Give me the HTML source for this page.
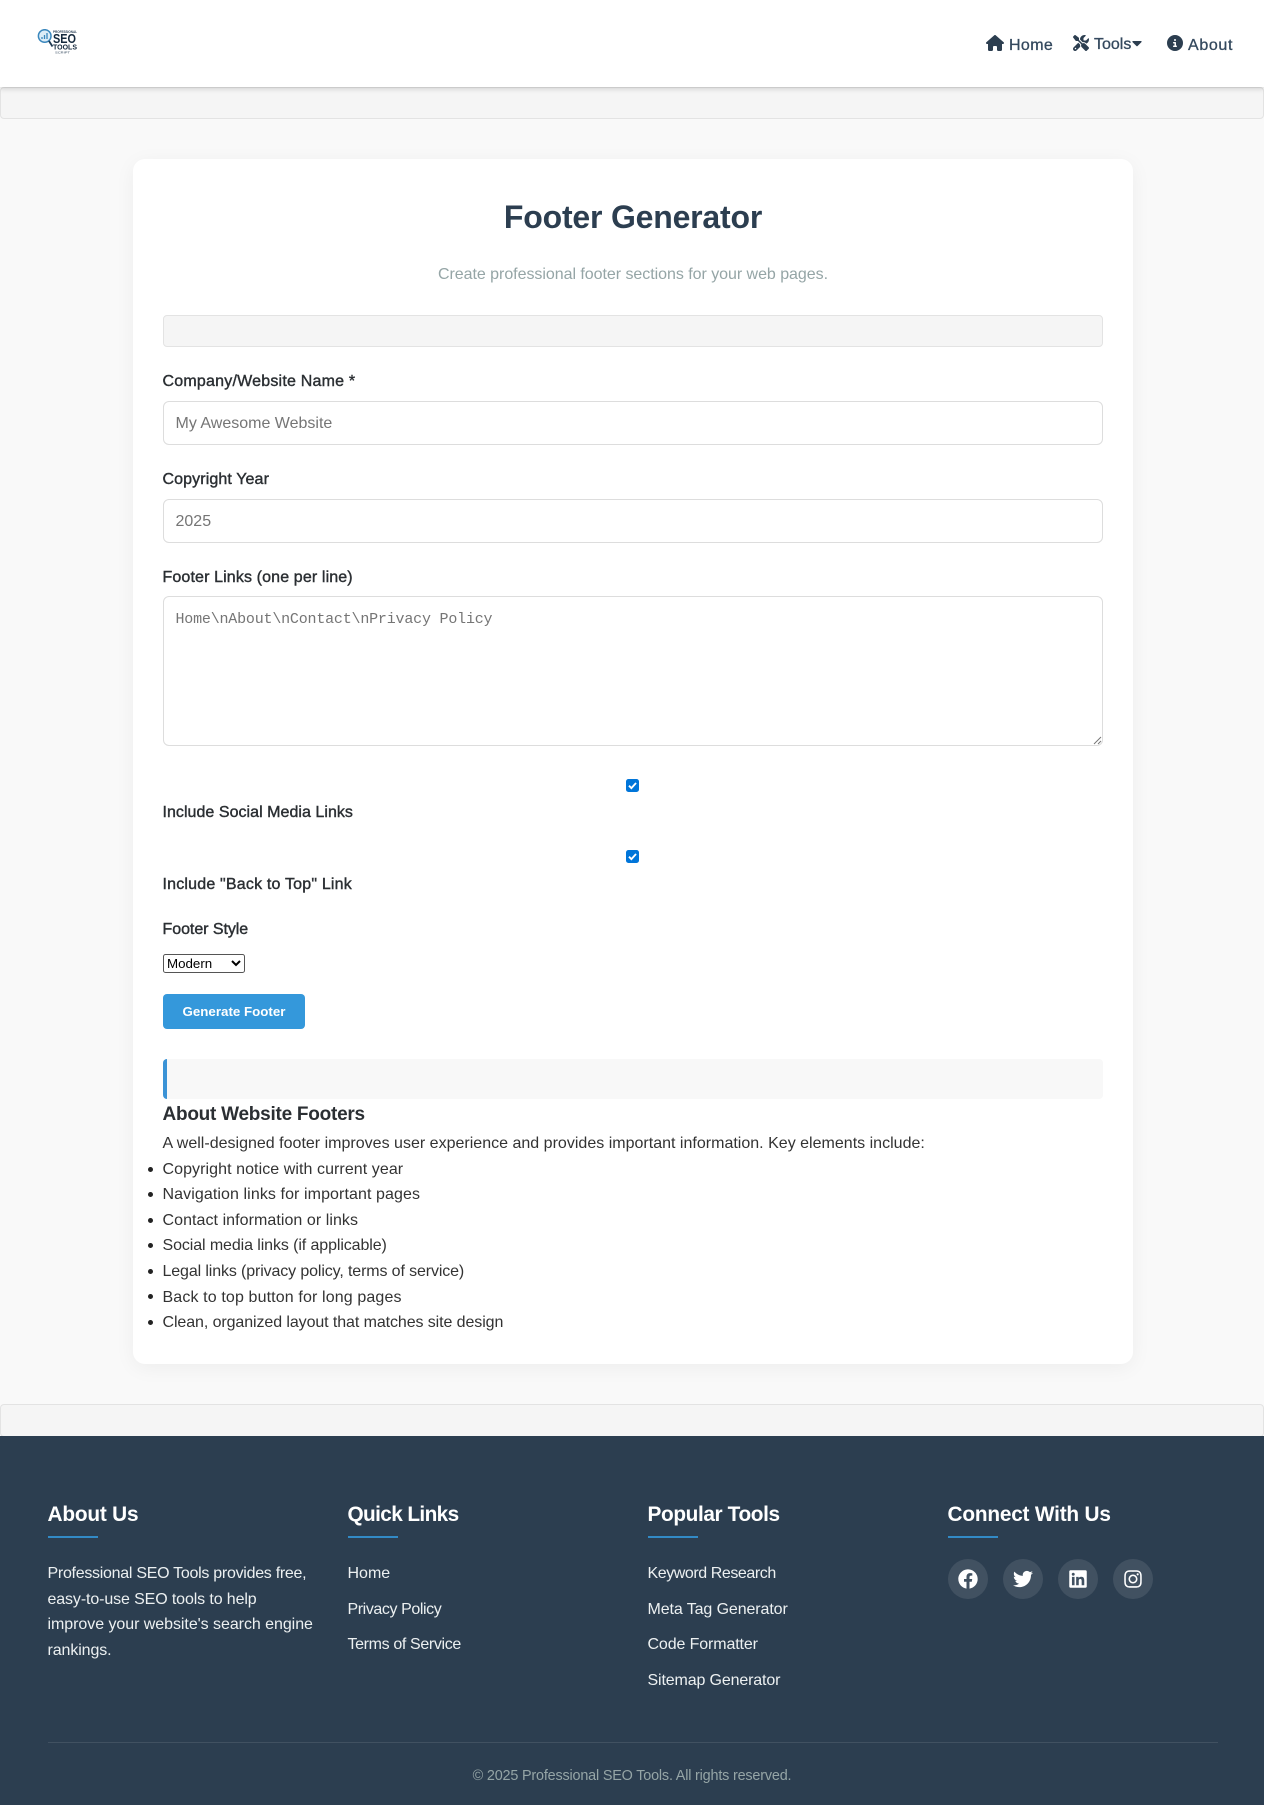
<!DOCTYPE html>
<html lang="en">
<head>
<meta charset="utf-8">
<title>Footer Generator</title>
<style>
*{box-sizing:border-box}
html,body{margin:0;padding:0}
body{position:relative;width:1264px;height:1805px;overflow:hidden;background:#f9f9f9;font-family:"Liberation Sans",Arial,sans-serif;color:#333}
.t{position:absolute;white-space:nowrap;line-height:20px;font-size:16px}
.lb{color:#2b2f33;-webkit-text-stroke:.4px #2b2f33}
.nv{color:#34495e;-webkit-text-stroke:.3px #34495e}
.bar{position:absolute;background:#f5f5f5;border:1px solid #e3e3e3;border-radius:4px}
.in{position:absolute;left:163px;width:940px;background:#fff;border:1px solid #ddd;border-radius:6px}
.ph{color:#757575}
.li{color:#333}
.dot{position:absolute;left:148px;width:5px;height:5px;border-radius:50%;background:#222}
.fh{position:absolute;white-space:nowrap;font-size:20.8px;line-height:24px;font-weight:700;color:#fff}
.ul{position:absolute;width:50px;height:2px;background:#3498db;opacity:.85}
.ft{position:absolute;white-space:nowrap;font-size:16px;line-height:20px;color:#ecf0f1}
.soc{position:absolute;top:1559px;width:40px;height:40px;border-radius:50%;background:rgba(255,255,255,.1)}
.soc svg{position:absolute;fill:#fff}
svg{display:block}
.cb{position:absolute;left:626px;width:13px;height:13px;background:#0075d9;border-radius:2.5px}
</style>
</head>
<body>
<!-- header -->
<div style="position:absolute;left:0;top:0;width:1264px;height:87px;background:#fff;box-shadow:0 2px 5px rgba(0,0,0,.15);z-index:2">
  <svg style="position:absolute;left:37px;top:29px;filter:blur(.3px)" width="42" height="26" viewBox="0 0 42 26">
    <circle cx="7.700" cy="7" r="6.300" fill="#dcecf7" stroke="#3a87bd" stroke-width="1.500"/>
    <path d="M5 10V8M7.500 10V6M10 10V4" stroke="#3a87bd" stroke-width="1.300"/>
    <path d="M12 12l3.500 5.500" stroke="#1f3a52" stroke-width="1.800"/>
    <text x="16" y="4" font-family="Liberation Sans" font-size="3.200" font-weight="700" fill="#34495e" textLength="24" lengthAdjust="spacingAndGlyphs">PROFESSIONAL</text>
    <text x="16" y="14" font-family="Liberation Sans" font-size="13" font-weight="700" fill="#14283c" textLength="23" lengthAdjust="spacingAndGlyphs">SEO</text>
    <text x="16" y="20.500" font-family="Liberation Sans" font-size="7.500" font-weight="700" fill="#14283c" textLength="24" lengthAdjust="spacingAndGlyphs">TOOLS</text>
    <text x="18" y="24.500" font-family="Liberation Sans" font-size="3" fill="#34495e" textLength="15" lengthAdjust="spacingAndGlyphs">SCRIPT</text>
  </svg>
  <svg style="position:absolute;left:986px;top:35px" width="18" height="16" viewBox="0 0 576 512" fill="#2c3e50"><path d="M575.8 255.5c0 18-15 32.100-32 32.100h-32l.7 160.200c0 2.700-.2 5.400-.5 8.100V472c0 22.100-17.900 40-40 40H456c-1.100 0-2.200 0-3.300-.1c-1.400 .1-2.800 .1-4.200 .1H416 392c-22.100 0-40-17.900-40-40V448 384c0-17.700-14.300-32-32-32H256c-17.700 0-32 14.300-32 32v64 24c0 22.100-17.900 40-40 40H160 128.100c-1.500 0-3-.1-4.500-.2c-1.200 .1-2.400 .2-3.600 .2H104c-22.100 0-40-17.900-40-40V360c0-.9 0-1.900 .1-2.800V287.600H32c-18 0-32-14-32-32.100c0-9 3-17 10-24L266.400 8c7-7 15-8 22-8s15 2 21 7L564.800 231.500c8 7 12 15 11 24z"/></svg>
  <span class="t nv" style="left:1009px;top:36px;letter-spacing:.38px">Home</span>
  <svg style="position:absolute;left:1073px;top:35px" width="16" height="16" viewBox="0 0 512 512" fill="#2c3e50"><path d="M78.600 5C69.100-2.400 55.600-1.500 47 7L7 47c-8.500 8.500-9.400 22-2.100 31.600l80 104c4.500 5.900 11.600 9.400 19 9.400h54.100l109 109c-14.700 29-10 65.400 14.300 89.600l112 112c12.500 12.500 32.800 12.500 45.300 0l64-64c12.500-12.500 12.500-32.800 0-45.300l-112-112c-24.200-24.200-60.600-29-89.600-14.300l-109-109V104c0-7.500-3.500-14.500-9.400-19L78.600 5zM19.900 396.100C7.200 408.800 0 426.100 0 444.100C0 481.600 30.400 512 67.900 512c18 0 35.300-7.200 48-19.900L233.700 374.300c-7.800-20.900-9-43.600-3.600-65.100l-61.700-61.700L19.900 396.100zM512 144c0-10.500-1.100-20.700-3.200-30.500c-2.400-11.200-16.100-14.100-24.200-6l-63.900 63.900c-3 3-7.100 4.700-11.300 4.700H352c-8.800 0-16-7.200-16-16V102.600c0-4.200 1.700-8.300 4.700-11.300l63.900-63.900c8.100-8.100 5.200-21.800-6-24.200C388.700 1.100 378.500 0 368 0C288.500 0 224 64.500 224 144l0 .8 85.300 85.300c36-9.100 75.800 .5 104 28.700L429 274.500c49-23 83-72.800 83-130.500zM56 432a24 24 0 1 1 48 0 24 24 0 1 1 -48 0z"/></svg>
  <span class="t nv" style="left:1094px;top:35px">Tools</span>
  <svg style="position:absolute;left:1131px;top:35px" width="12" height="16" viewBox="0 0 320 512" fill="#2c3e50"><path d="M31.300 192h257.300c17.800 0 26.700 21.500 14.100 34.100L174.100 354.800c-7.800 7.800-20.500 7.800-28.300 0L17.200 226.100C4.600 213.500 13.500 192 31.300 192z"/></svg>
  <svg style="position:absolute;left:1166.500px;top:35px" width="16" height="16" viewBox="0 0 512 512" fill="#2c3e50"><path d="M256 512A256 256 0 1 0 256 0a256 256 0 1 0 0 512zM216 336h24V272H216c-13.300 0-24-10.700-24-24s10.700-24 24-24h48c13.300 0 24 10.700 24 24v88h8c13.300 0 24 10.700 24 24s-10.700 24-24 24H216c-13.300 0-24-10.700-24-24s10.700-24 24-24zm40-208a32 32 0 1 1 0 64 32 32 0 1 1 0-64z"/></svg>
  <span class="t nv" style="left:1188px;top:36px;letter-spacing:.65px">About</span>
</div>
<div class="bar" style="left:0;top:87px;width:1264px;height:32px"></div>

<!-- card -->
<div style="position:absolute;left:133px;top:159px;width:1000px;height:1205px;background:#fff;border-radius:12px;box-shadow:0 4px 20px rgba(0,0,0,.05)"></div>
<div class="t" style="left:133px;width:1000px;text-align:center;top:199px;line-height:36px;font-size:32px;font-weight:700;color:#2c3e50;letter-spacing:-.2px">Footer Generator</div>
<div class="t" style="left:133px;width:1000px;text-align:center;top:265px;color:#95a5a6;letter-spacing:-.04px">Create professional footer sections for your web pages.</div>
<div class="bar" style="left:163px;top:315px;width:940px;height:32px"></div>

<div class="t lb" style="left:162.500px;top:371.500px;letter-spacing:.21px">Company/Website Name *</div>
<div class="in" style="top:401px;height:44px"></div>
<div class="t ph" style="left:175.500px;top:414px">My Awesome Website</div>

<div class="t lb" style="left:162.500px;top:469.500px;letter-spacing:.11px">Copyright Year</div>
<div class="in" style="top:499px;height:44px"></div>
<div class="t ph" style="left:175.500px;top:512px">2025</div>

<div class="t lb" style="left:162.500px;top:567.500px;letter-spacing:.13px">Footer Links (one per line)</div>
<div class="in" style="top:596px;height:150px"></div>
<div class="t ph" style="left:175.500px;top:610px;font-family:'Liberation Mono',monospace;font-size:15px;letter-spacing:-.2px">Home\nAbout\nContact\nPrivacy Policy</div>
<svg style="position:absolute;left:1092px;top:735px" width="10" height="10" viewBox="0 0 10 10"><path d="M9 2L2 9M9 6L6 9" stroke="#777" stroke-width="1" fill="none"/></svg>

<div class="cb" style="top:779px"><svg width="13" height="13" viewBox="0 0 14 14"><path d="M3.200 7.200l2.600 2.600 5-5.500" stroke="#fff" stroke-width="2" fill="none"/></svg></div>
<div class="t lb" style="left:162.500px;top:803px;letter-spacing:.04px">Include Social Media Links</div>
<div class="cb" style="top:850px"><svg width="13" height="13" viewBox="0 0 14 14"><path d="M3.200 7.200l2.600 2.600 5-5.500" stroke="#fff" stroke-width="2" fill="none"/></svg></div>
<div class="t lb" style="left:162.500px;top:875px;letter-spacing:.19px">Include "Back to Top" Link</div>

<div class="t lb" style="left:162.500px;top:920px;letter-spacing:-.05px">Footer Style</div>
<div style="position:absolute;left:163px;top:954px;width:82px;height:19px;border:1px solid #555;border-radius:2.500px;background:#fff"></div>
<div class="t" style="left:167px;top:954px;line-height:19px;font-size:13.333px;color:#000">Modern</div>
<svg style="position:absolute;left:231px;top:959px" width="10" height="8" viewBox="0 0 10 8"><path d="M1 2l4 4 4-4" stroke="#000" stroke-width="2" fill="none"/></svg>

<div style="position:absolute;left:163px;top:994px;width:142px;height:35px;background:#3498db;border-radius:4px"></div>
<div class="t" style="left:163px;width:142px;text-align:center;top:1002px;font-size:13.333px;font-weight:700;color:#fff;line-height:19px">Generate Footer</div>

<div style="position:absolute;left:163px;top:1059px;width:940px;height:40px;background:#f8f8f8;border-left:4px solid #3b93d6;border-radius:4px"></div>

<div class="t" style="left:162.500px;top:1103px;line-height:24px;font-size:19px;font-weight:700;color:#2b2f33;letter-spacing:-.25px">About Website Footers</div>
<div class="t li" style="left:162.500px;top:1134px;letter-spacing:.01px">A well-designed footer improves user experience and provides important information. Key elements include:</div>
<div class="dot" style="top:1166.500px"></div><div class="t li" style="left:162.500px;top:1160px;letter-spacing:.07px">Copyright notice with current year</div>
<div class="dot" style="top:1192px"></div><div class="t li" style="left:162.500px;top:1185px;letter-spacing:.09px">Navigation links for important pages</div>
<div class="dot" style="top:1217.500px"></div><div class="t li" style="left:162.500px;top:1211px;letter-spacing:.06px">Contact information or links</div>
<div class="dot" style="top:1243px"></div><div class="t li" style="left:162.500px;top:1236px;letter-spacing:-.1px">Social media links (if applicable)</div>
<div class="dot" style="top:1268.500px"></div><div class="t li" style="left:162.500px;top:1262px;letter-spacing:-.125px">Legal links (privacy policy, terms of service)</div>
<div class="dot" style="top:1294px"></div><div class="t li" style="left:162.500px;top:1288px;letter-spacing:.13px">Back to top button for long pages</div>
<div class="dot" style="top:1320px"></div><div class="t li" style="left:162.500px;top:1313px;letter-spacing:-.09px">Clean, organized layout that matches site design</div>

<div class="bar" style="left:0;top:1404px;width:1264px;height:33px"></div>

<!-- footer -->
<div style="position:absolute;left:0;top:1436px;width:1264px;height:369px;background:#2c3e50"></div>
<div class="fh" style="left:47.500px;top:1503px;letter-spacing:-.2px">About Us</div><div class="ul" style="left:47.500px;top:1536px"></div>
<div class="fh" style="left:347.500px;top:1503px;letter-spacing:-.62px">Quick Links</div><div class="ul" style="left:347.500px;top:1536px"></div>
<div class="fh" style="left:647.500px;top:1503px;letter-spacing:-.38px">Popular Tools</div><div class="ul" style="left:647.500px;top:1536px"></div>
<div class="fh" style="left:947.500px;top:1503px;letter-spacing:-.2px">Connect With Us</div><div class="ul" style="left:947.500px;top:1536px"></div>

<div class="ft" style="left:47.500px;top:1564px;letter-spacing:-.28px">Professional SEO Tools provides free,</div>
<div class="ft" style="left:47.500px;top:1589.500px;letter-spacing:-.12px">easy-to-use SEO tools to help</div>
<div class="ft" style="left:47.500px;top:1614.500px;letter-spacing:-.05px">improve your website's search engine</div>
<div class="ft" style="left:47.500px;top:1641px;letter-spacing:-.1px">rankings.</div>

<div class="ft" style="left:347.500px;top:1564px">Home</div>
<div class="ft" style="left:347.500px;top:1600px;letter-spacing:-.41px">Privacy Policy</div>
<div class="ft" style="left:347.500px;top:1635px;letter-spacing:-.36px">Terms of Service</div>

<div class="ft" style="left:647.500px;top:1564px;letter-spacing:-.43px">Keyword Research</div>
<div class="ft" style="left:647.500px;top:1600px;letter-spacing:-.1px">Meta Tag Generator</div>
<div class="ft" style="left:647.500px;top:1635px;letter-spacing:-.12px">Code Formatter</div>
<div class="ft" style="left:647.500px;top:1671px;letter-spacing:-.14px">Sitemap Generator</div>

<div class="soc" style="left:947.500px"><svg style="left:10px;top:10px" width="20" height="20" viewBox="0 0 512 512"><path d="M504 256C504 119 393 8 256 8S8 119 8 256c0 123.780 90.690 226.380 209.250 245V327.690h-63V256h63v-54.640c0-62.150 37-96.480 93.670-96.480 27.140 0 55.520 4.840 55.520 4.840v61h-31.280c-30.800 0-40.410 19.120-40.410 38.730V256h68.780l-11 71.690h-57.780V501C413.310 482.380 504 379.780 504 256z"/></svg></div>
<div class="soc" style="left:1002.500px"><svg style="left:10px;top:10px" width="20" height="20" viewBox="0 0 512 512"><path d="M459.370 151.716c.325 4.548.325 9.097.325 13.645 0 138.720-105.583 298.558-298.558 298.558-59.452 0-114.680-17.219-161.137-47.106 8.447.974 16.568 1.299 25.340 1.299 49.055 0 94.213-16.568 130.274-44.832-46.132-.975-84.792-31.188-98.112-72.772 6.498.974 12.995 1.624 19.818 1.624 9.421 0 18.843-1.300 27.614-3.573-48.081-9.747-84.143-51.980-84.143-102.985v-1.299c13.969 7.797 30.214 12.670 47.431 13.319-28.264-18.843-46.781-51.005-46.781-87.391 0-19.492 5.197-37.360 14.294-52.954 51.655 63.675 129.300 105.258 216.365 109.807-1.624-7.797-2.599-15.918-2.599-24.040 0-57.828 46.782-104.934 104.934-104.934 30.213 0 57.502 12.670 76.670 33.137 23.715-4.548 46.456-13.320 66.599-25.340-7.798 24.366-24.366 44.833-46.132 57.827 21.117-2.273 41.584-8.122 60.426-16.243-14.292 20.791-32.161 39.308-52.628 54.253z"/></svg></div>
<div class="soc" style="left:1057.500px"><svg style="left:11px;top:10px" width="18" height="20" viewBox="0 0 448 512"><path d="M416 32H31.900C14.300 32 0 46.500 0 64.300v383.400C0 465.500 14.300 480 31.900 480H416c17.600 0 32-14.500 32-32.300V64.300c0-17.800-14.400-32.300-32-32.300zM135.400 416H69V202.200h66.500V416zm-33.200-243c-21.300 0-38.500-17.300-38.500-38.500S80.900 96 102.200 96c21.200 0 38.500 17.300 38.500 38.500 0 21.300-17.200 38.500-38.500 38.500zm282.100 243h-66.400V312c0-24.800-.5-56.700-34.500-56.700-34.600 0-39.900 27-39.900 54.900V416h-66.400V202.200h63.700v29.200h.9c8.900-16.800 30.600-34.500 62.900-34.500 67.200 0 79.700 44.300 79.700 101.900V416z"/></svg></div>
<div class="soc" style="left:1112.500px"><svg style="left:11px;top:10px" width="18" height="20" viewBox="0 0 448 512"><path d="M224.100 141c-63.600 0-114.900 51.300-114.900 114.900s51.300 114.900 114.900 114.900S339 319.500 339 255.900 287.700 141 224.100 141zm0 189.600c-41.100 0-74.700-33.500-74.700-74.700s33.500-74.700 74.700-74.700 74.700 33.500 74.700 74.700-33.600 74.700-74.700 74.700zm146.400-194.300c0 14.900-12 26.800-26.800 26.800-14.900 0-26.800-12-26.800-26.800s12-26.800 26.800-26.800 26.800 12 26.800 26.800zm76.100 27.200c-1.700-35.900-9.900-67.700-36.200-93.900-26.200-26.200-58-34.400-93.900-36.200-37-2.100-147.900-2.100-184.900 0-35.800 1.700-67.600 9.900-93.900 36.100s-34.400 58-36.200 93.900c-2.100 37-2.100 147.900 0 184.900 1.700 35.900 9.900 67.700 36.200 93.900s58 34.400 93.900 36.200c37 2.100 147.900 2.100 184.900 0 35.900-1.700 67.700-9.900 93.900-36.200 26.200-26.200 34.400-58 36.200-93.900 2.100-37 2.100-147.800 0-184.800zM398.800 388c-7.800 19.600-22.900 34.700-42.600 42.600-29.500 11.700-99.500 9-132.100 9s-102.700 2.600-132.100-9c-19.600-7.800-34.700-22.900-42.600-42.600-11.700-29.500-9-99.500-9-132.100s-2.600-102.700 9-132.100c7.800-19.600 22.900-34.700 42.600-42.600 29.500-11.700 99.500-9 132.100-9s102.700-2.600 132.100 9c19.600 7.800 34.700 22.900 42.600 42.600 11.700 29.500 9 99.500 9 132.100s2.700 102.700-9 132.100z"/></svg></div>

<div style="position:absolute;left:47.500px;top:1742px;width:1170px;height:1px;background:#415161"></div>
<div class="t" style="left:0;width:1264px;text-align:center;top:1766px;font-size:14.400px;color:#95a5a6;letter-spacing:-.18px">© 2025 Professional SEO Tools. All rights reserved.</div>
</body>
</html>
